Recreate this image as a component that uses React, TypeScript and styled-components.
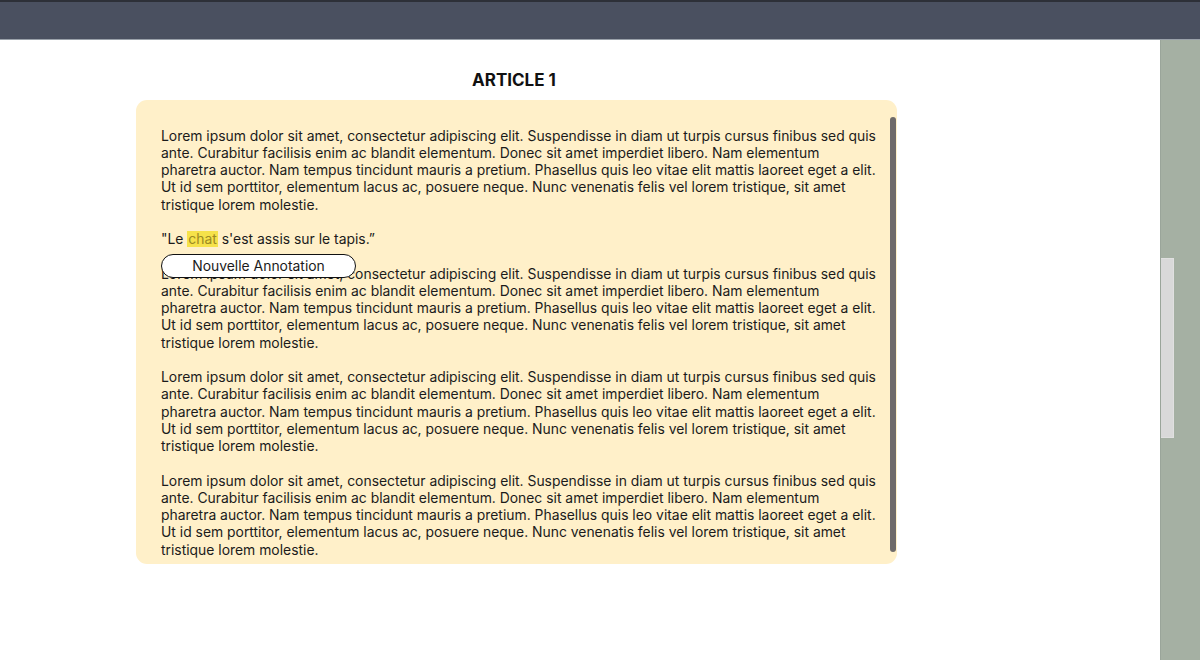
import React from "react";
import styled, { createGlobalStyle } from "styled-components";

const Global = createGlobalStyle`
  html, body { margin: 0; padding: 0; background: #ffffff; }
  body { font-family: Inter, "Noto Sans", sans-serif; }
  * { box-sizing: border-box; }
`;

const Page = styled.div`
  width: 1200px;
  height: 660px;
  display: flex;
  flex-direction: column;
  overflow: hidden;
`;

const TopBar = styled.header`
  height: 40px;
  flex: none;
  background: #4a5060;
  border-top: 2px solid #2d3038;
  border-bottom: 1px solid #9aa1aa;
`;

const Body = styled.div`
  flex: 1;
  display: flex;
  min-height: 0;
`;

const Main = styled.main`
  flex: 1;
  padding: 30px 0 0 136px;
`;

const Column = styled.section`
  width: 761px;
  display: flex;
  flex-direction: column;
  align-items: center;
  gap: 10px;
`;

const Title = styled.h1`
  margin: 0;
  font-family: Inter, sans-serif;
  font-weight: 700;
  font-size: 17px;
  line-height: 20px;
  color: #111111;
  padding-right: 5px;
`;

const Card = styled.article`
  position: relative;
  width: 761px;
  height: 464px;
  background: #fff0c9;
  border-radius: 11px;
  overflow: hidden;
  padding: 27.5px 20px 0 25px;
`;

const Paragraph = styled.p`
  margin: 0 0 17.25px 0;
  font-family: Inter, sans-serif;
  font-size: 13.9px;
  line-height: 17.25px;
  color: #1b1b1b;
`;

const Highlight = styled.span`
  background: #f6e24a;
  color: #9c8a24;
  padding: 0 1px;
`;

const AnnotationButton = styled.button`
  position: absolute;
  left: 25px;
  top: 154px;
  width: 195px;
  height: 24px;
  border: 1px solid #111111;
  border-radius: 12px;
  background: #ffffff;
  font-family: Inter, sans-serif;
  font-size: 13.9px;
  color: #1b1b1b;
  padding: 0;
  cursor: pointer;
`;

const ScrollThumb = styled.div`
  position: absolute;
  right: 1px;
  top: 17px;
  bottom: 12px;
  width: 6px;
  border-radius: 3px;
  background: #6e6a6a;
`;

const Sidebar = styled.aside`
  width: 40px;
  flex: none;
  background: #a5b0a3;
  border-left: 1px solid #9aa59a;
  padding-top: 218px;
`;

const SideTab = styled.div`
  width: 13px;
  height: 180px;
  background: #d9d9d9;
  border: 1px solid #e0e0e0;
  border-left: none;
`;

const lorem =
  "Lorem ipsum dolor sit amet, consectetur adipiscing elit. Suspendisse in diam ut turpis cursus finibus sed quis ante. Curabitur facilisis enim ac blandit elementum. Donec sit amet imperdiet libero. Nam elementum pharetra auctor. Nam tempus tincidunt mauris a pretium. Phasellus quis leo vitae elit mattis laoreet eget a elit. Ut id sem porttitor, elementum lacus ac, posuere neque. Nunc venenatis felis vel lorem tristique, sit amet tristique lorem molestie.";

export default function App() {
  return (
    <Page>
      <Global />
      <TopBar />
      <Body>
        <Main>
          <Column>
            <Title>ARTICLE 1</Title>
            <Card>
              <Paragraph>{lorem}</Paragraph>
              <Paragraph>
                "Le <Highlight>chat</Highlight> s'est assis sur le tapis.”
              </Paragraph>
              <Paragraph>{lorem}</Paragraph>
              <Paragraph>{lorem}</Paragraph>
              <Paragraph>{lorem}</Paragraph>
              <AnnotationButton>Nouvelle Annotation</AnnotationButton>
              <ScrollThumb />
            </Card>
          </Column>
        </Main>
        <Sidebar>
          <SideTab />
        </Sidebar>
      </Body>
    </Page>
  );
}
